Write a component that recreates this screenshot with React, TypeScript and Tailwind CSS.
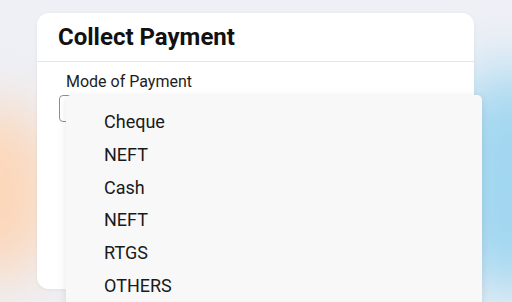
import React from "react";

const items = ["Cheque", "NEFT", "Cash", "NEFT", "RTGS", "OTHERS"];

export default function App() {
  return (
    <div
      className="relative w-[512px] h-[302px] overflow-hidden bg-[#eef0f6] flex flex-col items-start pt-[13px] pl-[37px]"
      style={{ fontFamily: "Roboto, 'Noto Sans', sans-serif" }}
    >
      {/* background glows */}
      <div className="absolute -left-[70px] top-[105px] w-[125px] h-[175px] rounded-full bg-[#fcd6b8] blur-[30px]" />
      <div className="absolute -right-[72px] top-[70px] w-[140px] h-[225px] rounded-full bg-[#a0d6f0] blur-[30px]" />

      {/* card */}
      <div className="relative flex flex-col w-[437px] h-[276px] rounded-[12px] bg-white shadow-[0_1px_4px_rgba(0,0,0,0.05)]">
        <div className="flex items-start h-[49px] border-b border-[#e6e6e6] pl-[21px] pt-2">
          <h1 className="text-[24px] leading-[32px] font-bold text-[#111]">Collect Payment</h1>
        </div>
        <div className="flex flex-col gap-[1px] px-[22px] pt-[8px]">
          <div className="ml-[7px] text-[16px] leading-[24px] text-[#1d1d1d]">Mode of Payment</div>
          <div className="h-[27px] rounded-[4px] border border-[#8f8f8f] bg-white" />
        </div>
      </div>

      {/* dropdown menu */}
      <div className="absolute left-[66px] top-[95px] flex flex-col w-[416px] h-[230px] rounded-[5px] bg-[#f8f8f8] shadow-[0_2px_8px_rgba(0,0,0,0.10)] pt-[11px]">
        {items.map((it, i) => (
          <div
            key={i}
            className="flex items-center h-[32.7px] pl-[38px] text-[18px] leading-[24px] text-[#1a1a1a]"
          >
            {it}
          </div>
        ))}
      </div>
    </div>
  );
}
